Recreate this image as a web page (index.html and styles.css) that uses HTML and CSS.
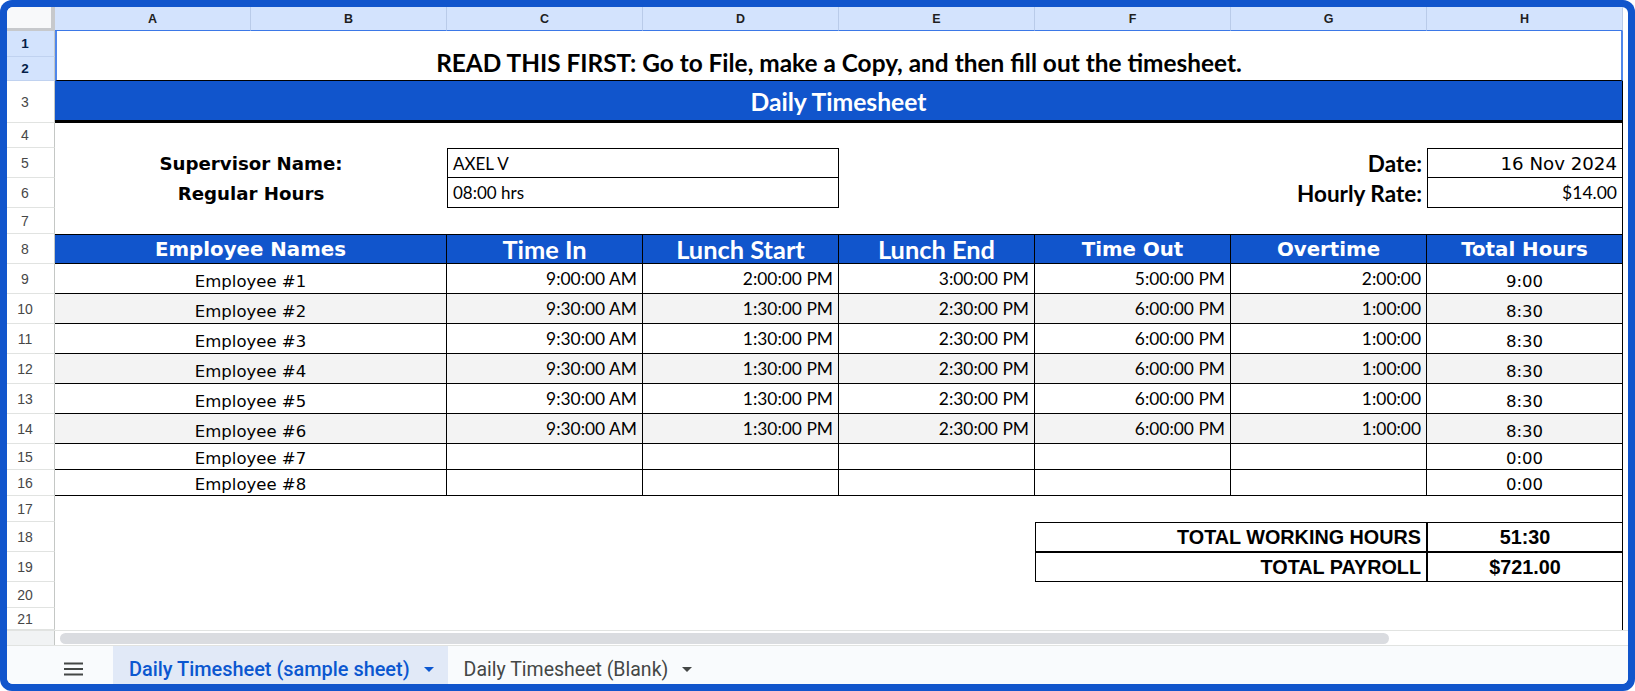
FILE: index.html
```html
<!DOCTYPE html>
<html lang="en">
<head>
<meta charset="utf-8">
<title>Daily Timesheet</title>
<link rel="stylesheet" href="styles.css">
</head>
<body>
<div class="frame">
 <div class="app">
  <div class="sheet">
   <div class="corner"></div>
   <div class="ch">A</div><div class="ch">B</div><div class="ch">C</div><div class="ch">D</div>
   <div class="ch">E</div><div class="ch">F</div><div class="ch">G</div><div class="ch">H</div>

   <div class="rh sel">1</div>
   <div class="c title s8"><span class="kb f-read">READ THIS FIRST: Go to File, make a Copy, and then fill out the timesheet.</span></div>
   <div class="rh sel">2</div>

   <div class="rh">3</div>
   <div class="c band s8"><span class="kb f-band">Daily Timesheet</span></div>

   <div class="rh">4</div>
   <div class="c e8"></div>

   <div class="rh">5</div>
   <div class="c s2 ctr"><span class="vb f-lab">Supervisor Name:</span></div>
   <div class="c s2 box"><span class="k f-val">AXEL V</span></div>
   <div class="c s2"></div>
   <div class="c r"><span class="kb f-rlab">Date:</span></div>
   <div class="c r box"><span class="v f-date">16 Nov 2024</span></div>

   <div class="rh">6</div>
   <div class="c s2 ctr"><span class="vb f-lab">Regular Hours</span></div>
   <div class="c s2 box nt"><span class="k f-val">08:00 hrs</span></div>
   <div class="c s2"></div>
   <div class="c r"><span class="kb f-rlab">Hourly Rate:</span></div>
   <div class="c r box nt"><span class="k f-usd">$14.00</span></div>

   <div class="rh">7</div>
   <div class="c e8"></div>

   <div class="rh">8</div>
   <div class="c th s2"><span class="vb f-th">Employee Names</span></div>
   <div class="c th"><span class="kb f-kth">Time In</span></div>
   <div class="c th"><span class="kb f-kth">Lunch Start</span></div>
   <div class="c th"><span class="kb f-kth">Lunch End</span></div>
   <div class="c th"><span class="vb f-th">Time Out</span></div>
   <div class="c th"><span class="vb f-th">Overtime</span></div>
   <div class="c th"><span class="vb f-th">Total Hours</span></div>

   <div class="rh">9</div>
   <div class="c td s2 ctr"><span class="v lo">Employee #1</span></div>
   <div class="c td r"><span class="k f-time">9:00:00 AM</span></div>
   <div class="c td r"><span class="k f-time">2:00:00 PM</span></div>
   <div class="c td r"><span class="k f-time">3:00:00 PM</span></div>
   <div class="c td r"><span class="k f-time">5:00:00 PM</span></div>
   <div class="c td r"><span class="k f-time">2:00:00</span></div>
   <div class="c td ctr"><span class="v lo">9:00</span></div>

   <div class="rh">10</div>
   <div class="c td s2 ctr alt"><span class="v lo">Employee #2</span></div>
   <div class="c td r alt"><span class="k f-time">9:30:00 AM</span></div>
   <div class="c td r alt"><span class="k f-time">1:30:00 PM</span></div>
   <div class="c td r alt"><span class="k f-time">2:30:00 PM</span></div>
   <div class="c td r alt"><span class="k f-time">6:00:00 PM</span></div>
   <div class="c td r alt"><span class="k f-time">1:00:00</span></div>
   <div class="c td ctr alt"><span class="v lo">8:30</span></div>

   <div class="rh">11</div>
   <div class="c td s2 ctr"><span class="v lo">Employee #3</span></div>
   <div class="c td r"><span class="k f-time">9:30:00 AM</span></div>
   <div class="c td r"><span class="k f-time">1:30:00 PM</span></div>
   <div class="c td r"><span class="k f-time">2:30:00 PM</span></div>
   <div class="c td r"><span class="k f-time">6:00:00 PM</span></div>
   <div class="c td r"><span class="k f-time">1:00:00</span></div>
   <div class="c td ctr"><span class="v lo">8:30</span></div>

   <div class="rh">12</div>
   <div class="c td s2 ctr alt"><span class="v lo">Employee #4</span></div>
   <div class="c td r alt"><span class="k f-time">9:30:00 AM</span></div>
   <div class="c td r alt"><span class="k f-time">1:30:00 PM</span></div>
   <div class="c td r alt"><span class="k f-time">2:30:00 PM</span></div>
   <div class="c td r alt"><span class="k f-time">6:00:00 PM</span></div>
   <div class="c td r alt"><span class="k f-time">1:00:00</span></div>
   <div class="c td ctr alt"><span class="v lo">8:30</span></div>

   <div class="rh">13</div>
   <div class="c td s2 ctr"><span class="v lo">Employee #5</span></div>
   <div class="c td r"><span class="k f-time">9:30:00 AM</span></div>
   <div class="c td r"><span class="k f-time">1:30:00 PM</span></div>
   <div class="c td r"><span class="k f-time">2:30:00 PM</span></div>
   <div class="c td r"><span class="k f-time">6:00:00 PM</span></div>
   <div class="c td r"><span class="k f-time">1:00:00</span></div>
   <div class="c td ctr"><span class="v lo">8:30</span></div>

   <div class="rh">14</div>
   <div class="c td s2 ctr alt"><span class="v lo">Employee #6</span></div>
   <div class="c td r alt"><span class="k f-time">9:30:00 AM</span></div>
   <div class="c td r alt"><span class="k f-time">1:30:00 PM</span></div>
   <div class="c td r alt"><span class="k f-time">2:30:00 PM</span></div>
   <div class="c td r alt"><span class="k f-time">6:00:00 PM</span></div>
   <div class="c td r alt"><span class="k f-time">1:00:00</span></div>
   <div class="c td ctr alt"><span class="v lo">8:30</span></div>

   <div class="rh">15</div>
   <div class="c td s2 ctr"><span class="v lo2">Employee #7</span></div>
   <div class="c td"></div><div class="c td"></div><div class="c td"></div><div class="c td"></div><div class="c td"></div>
   <div class="c td ctr"><span class="v lo2">0:00</span></div>

   <div class="rh">16</div>
   <div class="c td s2 ctr"><span class="v lo2">Employee #8</span></div>
   <div class="c td"></div><div class="c td"></div><div class="c td"></div><div class="c td"></div><div class="c td"></div>
   <div class="c td ctr"><span class="v lo2">0:00</span></div>

   <div class="rh">17</div>
   <div class="c e8"></div>

   <div class="rh">18</div>
   <div class="c s5"></div>
   <div class="c s2 r sum"><span class="ab">TOTAL WORKING HOURS</span></div>
   <div class="c ctr sum nl"><span class="ab">51:30</span></div>

   <div class="rh">19</div>
   <div class="c s5"></div>
   <div class="c s2 r sum nt"><span class="ab">TOTAL PAYROLL</span></div>
   <div class="c ctr sum nt nl"><span class="ab">$721.00</span></div>

   <div class="rh">20</div>
   <div class="c e8"></div>

   <div class="rh">21</div>
   <div class="c e8"></div>
  </div>

  <div class="hscroll">
   <div class="hs-head"></div>
   <div class="hs-track"><div class="thumb"></div></div>
  </div>

  <div class="tabs">
   <div class="menu">
    <svg width="19" height="14" viewBox="0 0 19 14"><rect x="0" y="0.5" width="19" height="2" fill="#444746"/><rect x="0" y="6" width="19" height="2" fill="#444746"/><rect x="0" y="11.5" width="19" height="2" fill="#444746"/></svg>
   </div>
   <div class="tab active">
    <span class="tabtxt">Daily Timesheet (sample sheet)</span>
    <svg width="10" height="5" viewBox="0 0 10 5"><path d="M0 0h10L5 5z" fill="#0b57d0"/></svg>
   </div>
   <div class="tab">
    <span class="tabtxt">Daily Timesheet (Blank)</span>
    <svg width="10" height="5" viewBox="0 0 10 5"><path d="M0 0h10L5 5z" fill="#444746"/></svg>
   </div>
  </div>
 </div>
</div>
</body>
</html>
```

FILE: styles.css
```css
* { box-sizing: border-box; margin: 0; padding: 0; }
html, body { width: 1635px; height: 691px; overflow: hidden; background: #fff; }

.frame {
  width: 1635px; height: 691px;
  background: #1155cc;
  border-radius: 12px;
  padding: 7px;
}
.app {
  height: 677px;
  background: #fff;
  border-radius: 6px;
  overflow: hidden;
  display: flex;
  flex-direction: column;
}

.sheet {
  flex: none;
  height: 623px;
  display: grid;
  grid-template-columns: 48px repeat(8, 196px);
  grid-template-rows: 24px 26px 24px 42px 25px 30px 30px 26px 30px repeat(6, 30px) 26px 26px 26px 30px 30px 26px 22px;
}

.corner {
  background: #f8f9fa;
  border-right: 4px solid #c7c9cc;
  border-bottom: 3px solid #c7c9cc;
}
.ch {
  background: #d3e3fd;
  border-right: 1px solid #b9cbe9;
  border-bottom: 1px solid #3b78e7;
  display: flex; align-items: center; justify-content: center;
  font: bold 12.5px "Liberation Sans", Arial, sans-serif;
  color: #1f1f1f;
}
.rh {
  grid-column: 1;
  background: #fff;
  border-right: 1px solid #c4c7c5;
  border-bottom: 1px solid #e1e3e1;
  display: flex; align-items: center; justify-content: center;
  padding-right: 11px;
  font: 14px "Liberation Sans", Arial, sans-serif;
  color: #474747;
}
.rh.sel { background: #d3e3fd; color: #041e49; font-weight: bold; font-size: 13.5px; border-bottom-color: #c0d2f0; }

.c {
  display: flex; align-items: center;
  padding: 0 5px;
  white-space: nowrap;
  overflow: hidden;
  min-width: 0;
}
.s2 { grid-column: span 2; }
.s5 { grid-column: span 5; }
.s8 { grid-column: span 8; }
.r { justify-content: flex-end; }
.ctr { justify-content: center; }

.title {
  grid-row: span 2;
  justify-content: center; align-items: flex-end;
  padding-bottom: 3px;
  border-left: 2px solid #4f86ea;
  border-right: 2px solid #4f86ea;
  border-bottom: 1px solid #000;
  color: #000;
}
.band {
  background: #1155cc;
  color: #fff;
  justify-content: center;
  padding-top: 2px;
  border-bottom: 3px solid #000;
  border-right: 1px solid #000;
}
.e8 { grid-column: span 8; border-right: 1px solid #000; }

.box { border: 1px solid #000; }
.nt { border-top: none; }
.nl { border-left: none; }

.th {
  background: #1155cc;
  color: #fff;
  justify-content: center;
  border-top: 1px solid #000;
  border-bottom: 1px solid #000;
  border-right: 1px solid #000;
}
.td { border-right: 1px solid #000; border-bottom: 1px solid #000; }
.alt { background: #f3f3f3; }
.sum { border: 1px solid #000; }

/* fonts */
.v { font: 16.5px "DejaVu Sans", Verdana, sans-serif; color: #000; }
.f-date { font-size: 18.2px; }
.lo { padding-top: 6px; }
.lo2 { padding-top: 3px; }
.vb { font-family: "DejaVu Sans", Verdana, sans-serif; font-weight: bold; }
.f-lab { font-size: 18.2px; color: #000; }
.f-th { font-size: 19.8px; }
.k { font-family: Lato, "Open Sans", sans-serif; color: #000; }
.kb { font-family: Lato, "Open Sans", sans-serif; font-weight: bold; }
.f-read { font-size: 24.4px; line-height: 28px; }
.f-band { font-size: 24.7px; }
.f-val { font-size: 17px; }
.f-usd { font-size: 17.5px; }
.f-time { font-size: 17.4px; }
.f-rlab { font-size: 22.5px; color: #000; }
.f-kth { font-size: 25.4px; }
.ab { font: bold 19.8px "Liberation Sans", Arial, sans-serif; color: #000; }

/* horizontal scroll */
.hscroll {
  flex: none;
  height: 16px;
  display: flex;
  border-top: 1px solid #e1e3e1;
  border-bottom: 1px solid #e1e3e1;
}
.hs-head { width: 48px; background: #f1f3f4; border-right: 1px solid #c4c7c5; }
.hs-track { flex: 1; padding: 2px 0 0 5px; }
.thumb { width: 1329px; height: 11px; background: #dadce0; border-radius: 6px; }

/* tabs */
.tabs {
  flex: 1;
  display: flex;
  background: #f9fbfd;
}
.menu { width: 106px; display: flex; align-items: center; padding: 8px 0 0 57px; }
.tab {
  display: flex; align-items: center; gap: 14px;
  padding: 8px 14px 0 16px;
  font: 400 19.5px Roboto, "Open Sans", sans-serif;
  color: #444746;
}
.tab.active { background: #e1e9f7; color: #0b57d0; font-weight: 500; font-size: 19.9px; }
```
